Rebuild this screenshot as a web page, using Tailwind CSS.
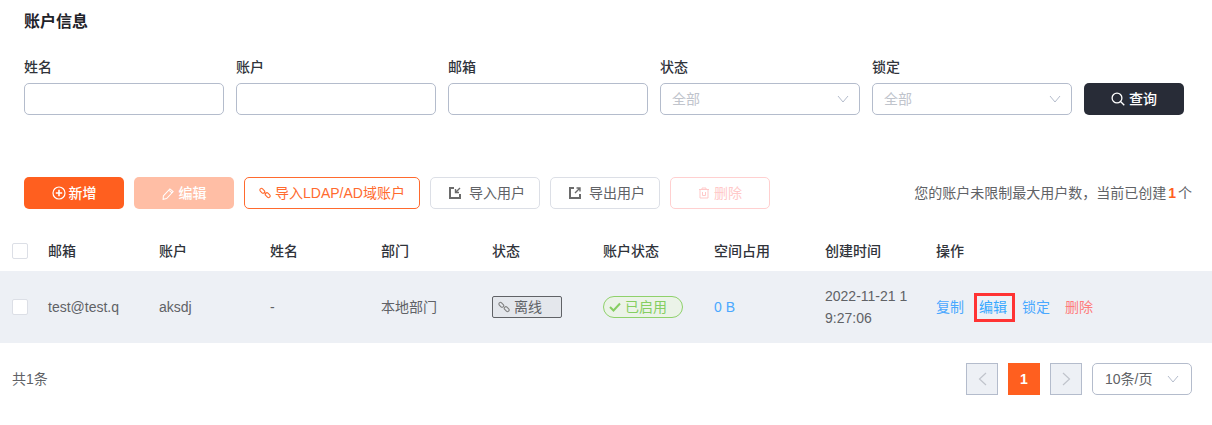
<!DOCTYPE html>
<html lang="zh">
<head>
    <meta charset="UTF-8">
    <title>账户信息</title>
    <script src="https://cdn.jsdelivr.net/npm/@tailwindcss/browser@4"></script>
</head>
<body class="bg-white font-['Liberation_Sans','Noto_Sans_CJK_SC',sans-serif] text-[14px] text-[#606266] h-[425px] overflow-hidden">

    <div class="px-6 h-[44px] flex items-center">
        <h2 class="text-[16px] font-bold text-[#1f2329] leading-none">账户信息</h2>
    </div>

    <!-- filters -->
    <div class="px-6 pt-[13px] flex items-end gap-3">
        <div class="w-[200px]">
            <div class="h-[26px] leading-[20px] font-medium text-[#30333a]">姓名</div>
            <input class="block w-full h-8 rounded-[5px] border border-[#b4bccc]">
        </div>
        <div class="w-[200px]">
            <div class="h-[26px] leading-[20px] font-medium text-[#30333a]">账户</div>
            <input class="block w-full h-8 rounded-[5px] border border-[#b4bccc]">
        </div>
        <div class="w-[200px]">
            <div class="h-[26px] leading-[20px] font-medium text-[#30333a]">邮箱</div>
            <input class="block w-full h-8 rounded-[5px] border border-[#b4bccc]">
        </div>
        <div class="w-[200px]">
            <div class="h-[26px] leading-[20px] font-medium text-[#30333a]">状态</div>
            <div class="h-8 rounded-[5px] border border-[#b4bccc] pl-[11px] pr-[10px] flex items-center justify-between text-[#c0c4cc]">
                全部
                <svg width="12" height="8" viewBox="0 0 12 8" fill="none" stroke="#b4bccc" stroke-width="1"><path d="M1 1l5 6 5-6"/></svg>
            </div>
        </div>
        <div class="w-[200px]">
            <div class="h-[26px] leading-[20px] font-medium text-[#30333a]">锁定</div>
            <div class="h-8 rounded-[5px] border border-[#b4bccc] pl-[11px] pr-[10px] flex items-center justify-between text-[#c0c4cc]">
                全部
                <svg width="12" height="8" viewBox="0 0 12 8" fill="none" stroke="#b4bccc" stroke-width="1"><path d="M1 1l5 6 5-6"/></svg>
            </div>
        </div>
        <button class="w-[100px] h-8 rounded-[5px] bg-[#282c37] text-white font-medium flex items-center justify-center gap-1">
            <svg width="14" height="14" viewBox="0 0 14 14" fill="none" stroke="white" stroke-width="1.300"><circle cx="6" cy="6" r="4.900"/><path d="M9.500 9.500l3.800 3.800"/></svg>
            查询
        </button>
    </div>

    <!-- toolbar -->
    <div class="px-6 mt-[62px] flex items-center gap-[10px] h-8">
        <button class="w-[100px] h-8 rounded-[5px] bg-[#ff5f1f] text-white font-medium flex items-center justify-center gap-[3px]">
            <svg width="14" height="14" viewBox="0 0 14 14" fill="none" stroke="white" stroke-width="1.200"><circle cx="7" cy="7" r="6"/><path d="M7 3.800v6.400M3.800 7h6.400" stroke-width="1.600"/></svg>
            新增
        </button>
        <button class="w-[100px] h-8 rounded-[5px] bg-[#ffbea5] text-white font-medium flex items-center justify-center gap-1">
            <svg width="13" height="13" viewBox="0 0 14 14" fill="none" stroke="white" stroke-width="1.100"><path d="M1.500 9.500l7-7.500 3.500 3-7 7.500-3.800.8zM7.300 3.300l3.500 3"/></svg>
            编辑
        </button>
        <button class="w-[176px] h-8 rounded-[5px] border border-[#ff6a2e] text-[#ff6a2e] flex items-center justify-center gap-1">
            <svg width="12" height="12" viewBox="0 0 12 12" fill="none" stroke="#ff6a2e" stroke-width="1.100"><rect x="0.600" y="2.200" width="5.400" height="3.200" rx="1.500" transform="rotate(45 3.300 3.800)"/><rect x="6" y="6.600" width="5.400" height="3.200" rx="1.500" transform="rotate(45 8.700 8.200)"/><path d="M5 5l2 2"/></svg>
            导入LDAP/AD域账户
        </button>
        <button class="w-[110px] h-8 pl-1 rounded-[5px] border border-[#dcdfe6] flex items-center justify-center gap-2">
            <svg width="12" height="12" viewBox="0 0 12 12" fill="none" stroke="#6b6b6b" stroke-width="2"><path d="M5 1H1v10h10V7"/><path d="M11 1L7 5M6.500 2v3.500h3.500" stroke-width="1.400"/></svg>
            导入用户
        </button>
        <button class="w-[110px] h-8 pl-1 rounded-[5px] border border-[#dcdfe6] flex items-center justify-center gap-2">
            <svg width="12" height="12" viewBox="0 0 12 12" fill="none" stroke="#6b6b6b" stroke-width="2"><path d="M5 1H1v10h10V7"/><path d="M6 6l5-5M7.500 1H11v3.500" stroke-width="1.400"/></svg>
            导出用户
        </button>
        <button class="w-[100px] h-8 rounded-[5px] border border-[#ffd0d0] text-[#ffc9c9] flex items-center justify-center gap-1">
            <svg width="12" height="12" viewBox="0 0 12 12" fill="none" stroke="#ffc9c9" stroke-width="1"><path d="M1 2.500h10M4 2.500V1h4v1.500M2 2.500V11h8V2.500M4.500 5v3.500h3V5"/></svg>
            删除
        </button>
        <div class="ml-auto -mr-1 text-[#606266] whitespace-nowrap">您的账户未限制最大用户数，当前已创建<b class="mx-[2px] text-[#ff5f1f]">1</b>个</div>
    </div>

    <!-- table -->
    <div class="mt-[22px] grid grid-cols-[48px_repeat(8,111px)_1fr] h-[40px] items-center font-medium text-[#30333a]">
        <div class="pl-3"><div class="w-4 h-4 rounded-[2px] border border-[#dcdfe6] bg-white"></div></div>
        <div>邮箱</div>
        <div>账户</div>
        <div>姓名</div>
        <div>部门</div>
        <div>状态</div>
        <div>账户状态</div>
        <div>空间占用</div>
        <div>创建时间</div>
        <div>操作</div>
    </div>
    <div class="grid grid-cols-[48px_repeat(8,111px)_1fr] h-[72px] items-center bg-[#edf0f5]">
        <div class="pl-3"><div class="w-4 h-4 rounded-[2px] border border-[#dcdfe6] bg-white"></div></div>
        <div>test@test.q</div>
        <div>aksdj</div>
        <div>-</div>
        <div>本地部门</div>
        <div>
            <span class="w-[70px] h-[22px] pl-[5px] rounded-[2px] border border-[#606266] bg-[#e4e7ec] flex items-center gap-1">
                <svg width="12" height="12" viewBox="0 0 12 12" fill="none" stroke="#808080" stroke-width="1.100"><rect x="0.600" y="2.200" width="5.400" height="3.200" rx="1.500" transform="rotate(45 3.300 3.800)"/><rect x="6" y="6.600" width="5.400" height="3.200" rx="1.500" transform="rotate(45 8.700 8.200)"/></svg>
                离线
            </span>
        </div>
        <div>
            <span class="w-[80px] h-[22px] pl-[5px] rounded-full border border-[#8fd16b] bg-[#ebf3e8] text-[#85ce61] flex items-center gap-[4px]">
                <svg width="12" height="10" viewBox="0 0 12 10" fill="none" stroke="#85ce61" stroke-width="2"><path d="M1 5l3.500 3.500L11 1.500"/></svg>
                已启用
            </span>
        </div>
        <div class="text-[#4aa8ff]">0 B</div>
        <div class="w-[86px] leading-[22px] break-all">2022-11-21 19:27:06</div>
        <div class="flex items-center text-[#4aa8ff]">
            <span>复制</span>
            <span class="ml-[10px] w-[41px] h-[29px] pr-[3px] border-[3px] border-[#ff3333] text-[#38a8ff] flex items-center justify-center">编辑</span>
            <span class="ml-[7px]">锁定</span>
            <span class="ml-[15px] text-[#ff7c7c]">删除</span>
        </div>
    </div>

    <!-- footer -->
    <div class="pl-3 pr-5 mt-5 h-8 flex items-center">
        <span>共1条</span>
        <div class="ml-auto flex items-center gap-[10px]">
            <div class="w-8 h-8 border border-[#b4bccc] bg-[#edf0f5] flex items-center justify-center">
                <svg width="9" height="14" viewBox="0 0 9 14" fill="none" stroke="#c0c4cc" stroke-width="1.200"><path d="M8 1L1.500 7 8 13"/></svg>
            </div>
            <div class="w-8 h-8 bg-[#ff5f1f] text-white font-bold flex items-center justify-center">1</div>
            <div class="w-8 h-8 border border-[#b4bccc] bg-[#edf0f5] flex items-center justify-center">
                <svg width="9" height="14" viewBox="0 0 9 14" fill="none" stroke="#c0c4cc" stroke-width="1.200"><path d="M1 1l6.500 6L1 13"/></svg>
            </div>
            <div class="w-[100px] h-8 rounded-[5px] border border-[#b4bccc] pl-3 pr-3 flex items-center justify-between">
                10条/页
                <svg width="12" height="8" viewBox="0 0 12 8" fill="none" stroke="#b4bccc" stroke-width="1"><path d="M1 1l5 6 5-6"/></svg>
            </div>
        </div>
    </div>

</body>
</html>
